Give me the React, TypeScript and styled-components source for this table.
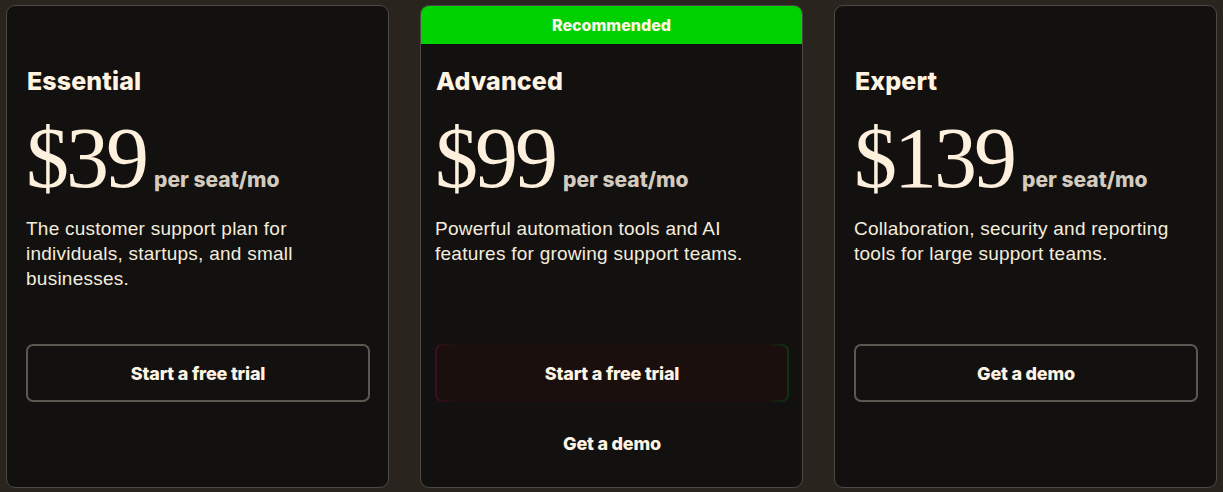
import React, { memo } from 'react';
import styled, { createGlobalStyle } from 'styled-components';

const GlobalStyle = createGlobalStyle`
  html, body {
    margin: 0;
    padding: 0;
    background: #29251e;
  }
  body {
    font-family: "Liberation Sans", Arial, sans-serif;
  }
`

const Page = styled.div`
  display: grid;
  grid-template-columns: repeat(3, 383px);
  column-gap: 31px;
  padding: 5px 6px;
  height: 492px;
  box-sizing: border-box;
`

const Card = styled.div<{ $featured?: boolean }>`
  display: flex;
  flex-direction: column;
  height: 483px;
  box-sizing: border-box;
  background: #121110;
  border: 1px solid #4c4944;
  border-radius: 9px;
  overflow: hidden;
  padding-top: ${p => (p.$featured ? '0' : '60px')};
`

const Banner = styled.div`
  height: 38px;
  background: #00d100;
  color: #fff6e6;
  font-family: Inter, "Liberation Sans", sans-serif;
  font-weight: 800;
  font-size: 16px;
  display: flex;
  align-items: center;
  justify-content: center;
  margin-bottom: 22px;
`

const Body = styled.div<{ $featured?: boolean }>`
  display: flex;
  flex-direction: column;
  padding: ${p => (p.$featured ? '0 13px 0 14px' : '0 18px 0 19px')};
`

const Title = styled.h3`
  margin: 0 0 0 1px;
  font-family: Inter, "Liberation Sans", sans-serif;
  font-weight: 800;
  font-size: 25px;
  line-height: 30px;
  letter-spacing: 0.1px;
  color: #fff3e2;
`

const PriceRow = styled.div`
  display: flex;
  align-items: baseline;
  margin-top: 18px;
  height: 88px;
`

const Amount = styled.span`
  font-family: "Liberation Serif", "Times New Roman", serif;
  font-size: 86px;
  line-height: 88px;
  letter-spacing: -3px;
  color: #fdf0dc;
  margin-right: 8px;
`

const Unit = styled.span`
  font-family: Inter, "Liberation Sans", sans-serif;
  font-weight: 800;
  font-size: 21px;
  color: #d3cbbd;
`

const Desc = styled.p`
  margin: 14px 0 53px;
  min-height: 75px;
  font-size: 19px;
  line-height: 25px;
  letter-spacing: 0.25px;
  color: #f5ecdc;
`

const Button = styled.button<{ $primary?: boolean }>`
  height: 58px;
  width: 100%;
  border-radius: 7px;
  font-family: Inter, "Liberation Sans", sans-serif;
  font-weight: 800;
  font-size: 18px;
  letter-spacing: -0.2px;
  color: #fff4e4;
  cursor: pointer;
  border: 2px solid ${p => (p.$primary ? 'transparent' : '#5c5851')};
  background: ${p =>
    p.$primary
      ? 'linear-gradient(#1a0f0d, #1a0f0d) padding-box, linear-gradient(90deg, #3a0f24, #1a0f0d 6%, #1a0f0d 94%, #0f3314) border-box'
      : '#121110'};
`

const TextLink = styled.a`
  margin-top: 12px;
  height: 58px;
  display: flex;
  align-items: center;
  justify-content: center;
  font-family: Inter, "Liberation Sans", sans-serif;
  font-weight: 800;
  font-size: 18px;
  letter-spacing: -0.2px;
  color: #fff4e4;
  cursor: pointer;
`

type Plan = {
  name: string
  price: string
  desc: string
  featured?: boolean
}

const plans: Plan[] = [
  {
    name: 'Essential',
    price: '$39',
    desc: 'The customer support plan for individuals, startups, and small businesses.',
  },
  {
    name: 'Advanced',
    price: '$99',
    desc: 'Powerful automation tools and AI features for growing support teams.',
    featured: true,
  },
  {
    name: 'Expert',
    price: '$139',
    desc: 'Collaboration, security and reporting tools for large support teams.',
  },
]

export default memo(function App() {
  return (
    <>
      <GlobalStyle />
      <Page>
        {plans.map((plan, i) => (
          <Card key={plan.name} $featured={plan.featured}>
            {plan.featured && <Banner>Recommended</Banner>}
            <Body $featured={plan.featured}>
              <Title>{plan.name}</Title>
              <PriceRow>
                <Amount>{plan.price}</Amount>
                <Unit>per seat/mo</Unit>
              </PriceRow>
              <Desc style={{ maxWidth: i === 0 ? 290 : 330 }}>{plan.desc}</Desc>
              {plan.featured ? (
                <>
                  <Button $primary>Start a free trial</Button>
                  <TextLink>Get a demo</TextLink>
                </>
              ) : (
                <Button>{i === 0 ? 'Start a free trial' : 'Get a demo'}</Button>
              )}
            </Body>
          </Card>
        ))}
      </Page>
    </>
  )
})
